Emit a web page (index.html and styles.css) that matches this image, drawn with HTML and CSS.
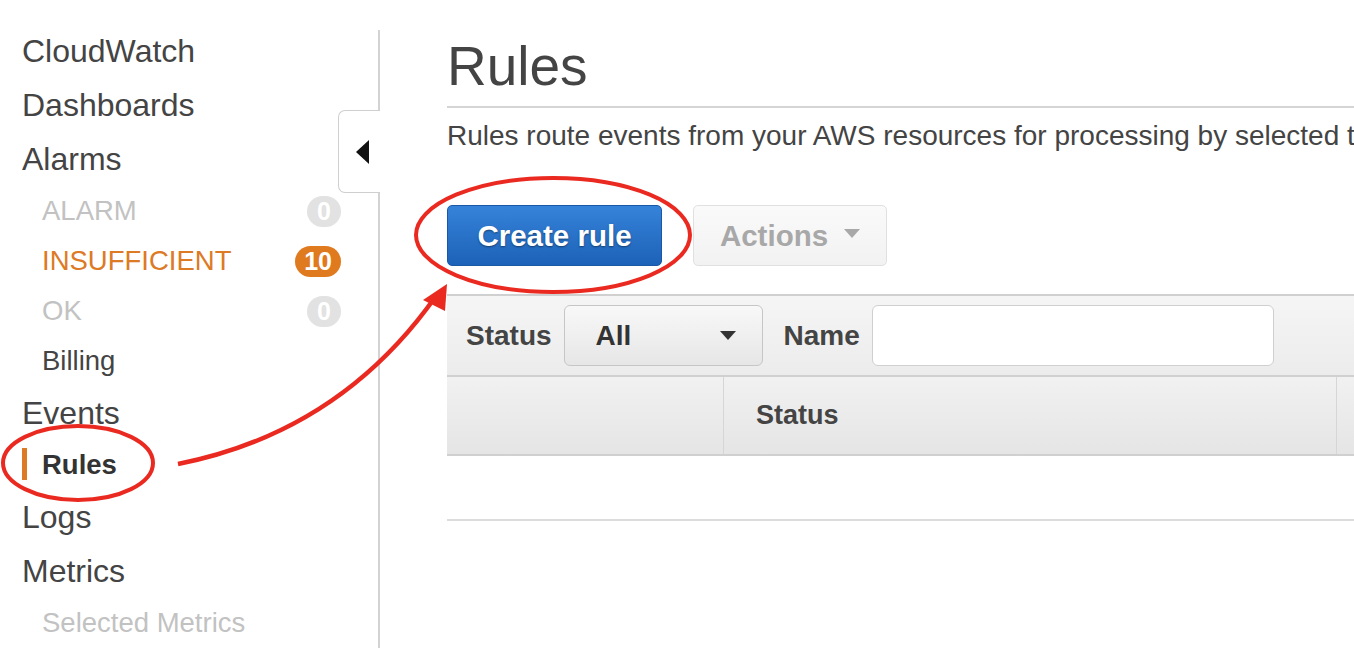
FILE: index.html
```html
<!DOCTYPE html>
<html>
<head>
<meta charset="utf-8">
<link rel="stylesheet" href="styles.css">
</head>
<body>
<div class="page">
  <aside class="sidebar">
    <nav class="nav">
      <div class="nav-top">CloudWatch</div>
      <div class="nav-top">Dashboards</div>
      <div class="nav-top">Alarms</div>
      <div class="nav-sub muted"><span>ALARM</span><span class="badge grey">0</span></div>
      <div class="nav-sub warn"><span>INSUFFICIENT</span><span class="badge orange">10</span></div>
      <div class="nav-sub muted"><span>OK</span><span class="badge grey">0</span></div>
      <div class="nav-sub">Billing</div>
      <div class="nav-top">Events</div>
      <div class="nav-sub active">Rules</div>
      <div class="nav-top">Logs</div>
      <div class="nav-top">Metrics</div>
      <div class="nav-sub muted">Selected Metrics</div>
    </nav>
    <div class="collapse-tab"><span class="tri"></span></div>
  </aside>
  <main class="main">
    <h1 class="title">Rules</h1>
    <p class="desc">Rules route events from your AWS resources for processing by selected targets.</p>
    <div class="toolbar">
      <button class="btn btn-primary">Create rule</button>
      <button class="btn btn-default">Actions <span class="caret light"></span></button>
    </div>
    <div class="filters">
      <span class="flabel">Status</span>
      <div class="select"><span>All</span><span class="caret dark"></span></div>
      <span class="flabel">Name</span>
      <div class="input"></div>
    </div>
    <div class="thead">
      <div class="th th-check"></div>
      <div class="th th-status">Status</div>
      <div class="th th-rest"></div>
    </div>
    <div class="trow"></div>
  </main>
</div>
<svg class="annot" width="1354" height="648" viewBox="0 0 1354 648">
  <ellipse cx="553" cy="235" rx="137" ry="57" fill="none" stroke="#ea2a20" stroke-width="4"/>
  <ellipse cx="78" cy="463" rx="75" ry="37" fill="none" stroke="#ea2a20" stroke-width="4"/>
  <path d="M178 464 Q340 432 436 296" fill="none" stroke="#ea2a20" stroke-width="4.5"/>
  <polygon points="447,284 423,300 445,311" fill="#ea2a20"/>
</svg>
</body>
</html>
```
FILE: styles.css
```css
* { box-sizing: border-box; }
html, body { margin: 0; padding: 0; }
body {
  width: 1354px;
  height: 648px;
  overflow: hidden;
  background: #fff;
  font-family: "Liberation Sans", Arial, Helvetica, sans-serif;
  color: #444;
  position: relative;
}
.page {
  display: flex;
  height: 648px;
}
.sidebar {
  width: 380px;
  flex: none;
  margin-top: 30px;
  border-right: 2px solid #d3d3d3;
  position: relative;
}
.nav {
  display: flex;
  flex-direction: column;
  margin-top: -6px;
}
.nav-top {
  height: 54px;
  line-height: 54px;
  padding-left: 22px;
  font-size: 32px;
  color: #444;
}
.nav-sub {
  height: 50px;
  display: flex;
  align-items: center;
  justify-content: space-between;
  padding-left: 42px;
  padding-right: 37px;
  font-size: 27.5px;
  color: #444;
  position: relative;
}
.nav-sub.muted { color: #c2c2c2; }
.nav-sub.warn { color: #dd7a25; }
.nav-sub.active { font-weight: bold; color: #333; }
.nav-sub.active::before {
  content: "";
  position: absolute;
  left: 22px;
  top: 8px;
  width: 5px;
  height: 32px;
  background: #dd7a25;
}
.badge {
  height: 31px;
  min-width: 34px;
  padding: 0 9px;
  border-radius: 16px;
  color: #fff;
  font-weight: bold;
  font-size: 25px;
  line-height: 31px;
  text-align: center;
}
.badge.grey { background: #e2e2e2; }
.badge.orange { background: #e07a1f; }
.collapse-tab {
  position: absolute;
  right: -2px;
  top: 80px;
  width: 42px;
  height: 83px;
  background: #fff;
  border: 1.5px solid #cfcfcf;
  border-right: none;
  border-radius: 7px 0 0 7px;
  display: flex;
  align-items: center;
  justify-content: center;
}
.tri {
  width: 0;
  height: 0;
  border-top: 12px solid transparent;
  border-bottom: 12px solid transparent;
  border-right: 13px solid #111;
  margin-left: 6px;
}
.main {
  flex: 1;
  padding-left: 67px;
  min-width: 0;
  overflow: hidden;
}
.title {
  margin: 0;
  padding-top: 38px;
  font-size: 55px;
  line-height: 56px;
  font-weight: normal;
  color: #444;
  height: 108px;
  border-bottom: 2px solid #d5d5d5;
  width: 1200px;
}
.desc {
  margin: 0;
  padding-top: 12px;
  font-size: 28px;
  line-height: 32px;
  color: #444;
  white-space: nowrap;
}
.toolbar {
  display: flex;
  gap: 31px;
  margin-top: 53px;
}
.btn {
  height: 61px;
  border-radius: 5px;
  font-family: "Liberation Sans", Arial, sans-serif;
  font-weight: bold;
  font-size: 29.5px;
  display: flex;
  align-items: center;
  justify-content: center;
  padding: 0;
}
.btn-primary {
  width: 215px;
  color: #fff;
  background: linear-gradient(#3583d9, #1c62b8);
  border: 1px solid #1a58a6;
  text-shadow: 0 1px 2px rgba(0,0,0,0.45);
}
.btn-default {
  width: 194px;
  color: #a8a8a8;
  background: linear-gradient(#fafafa, #f2f2f2);
  border: 1.5px solid #e0e0e0;
  gap: 16px;
}
.caret {
  display: inline-block;
  width: 0;
  height: 0;
  border-left: 8px solid transparent;
  border-right: 8px solid transparent;
}
.caret.light { border-top: 9px solid #a8a8a8; margin-bottom: 4px; }
.caret.dark { border-top: 9px solid #333; }
.filters {
  margin-top: 28px;
  width: 1200px;
  height: 81px;
  border-top: 2px solid #d0d0d0;
  background: linear-gradient(#f5f5f5, #ececec);
  display: flex;
  align-items: center;
  padding-left: 19px;
}
.flabel {
  font-weight: bold;
  font-size: 28px;
  color: #444;
  margin-right: 12px;
}
.select {
  width: 199px;
  height: 61px;
  border: 1.5px solid #c6c6c6;
  border-radius: 6px;
  background: linear-gradient(#f8f8f8, #e6e6e6);
  display: flex;
  align-items: center;
  justify-content: space-between;
  padding: 0 26px 0 31px;
  font-weight: bold;
  font-size: 28px;
  color: #333;
  margin-right: 21px;
}
.input {
  width: 402px;
  height: 61px;
  border: 1.5px solid #cfcfcf;
  border-radius: 6px;
  background: #fff;
}
.thead {
  width: 1200px;
  height: 81px;
  display: flex;
  border-top: 2px solid #d0d0d0;
  border-bottom: 2px solid #d0d0d0;
  background: linear-gradient(#f1f1f1, #e5e5e5);
}
.th {
  height: 100%;
  display: flex;
  align-items: center;
  font-weight: bold;
  font-size: 27px;
  color: #444;
}
.th-check { width: 277px; border-right: 1.5px solid #d6d6d6; }
.th-status { width: 613px; padding-left: 32px; border-right: 1.5px solid #d6d6d6; }
.th-rest { flex: 1; }
.trow {
  width: 1200px;
  height: 65px;
  border-bottom: 2px solid #dcdcdc;
}
.annot {
  position: absolute;
  left: 0;
  top: 0;
  pointer-events: none;
}
```
